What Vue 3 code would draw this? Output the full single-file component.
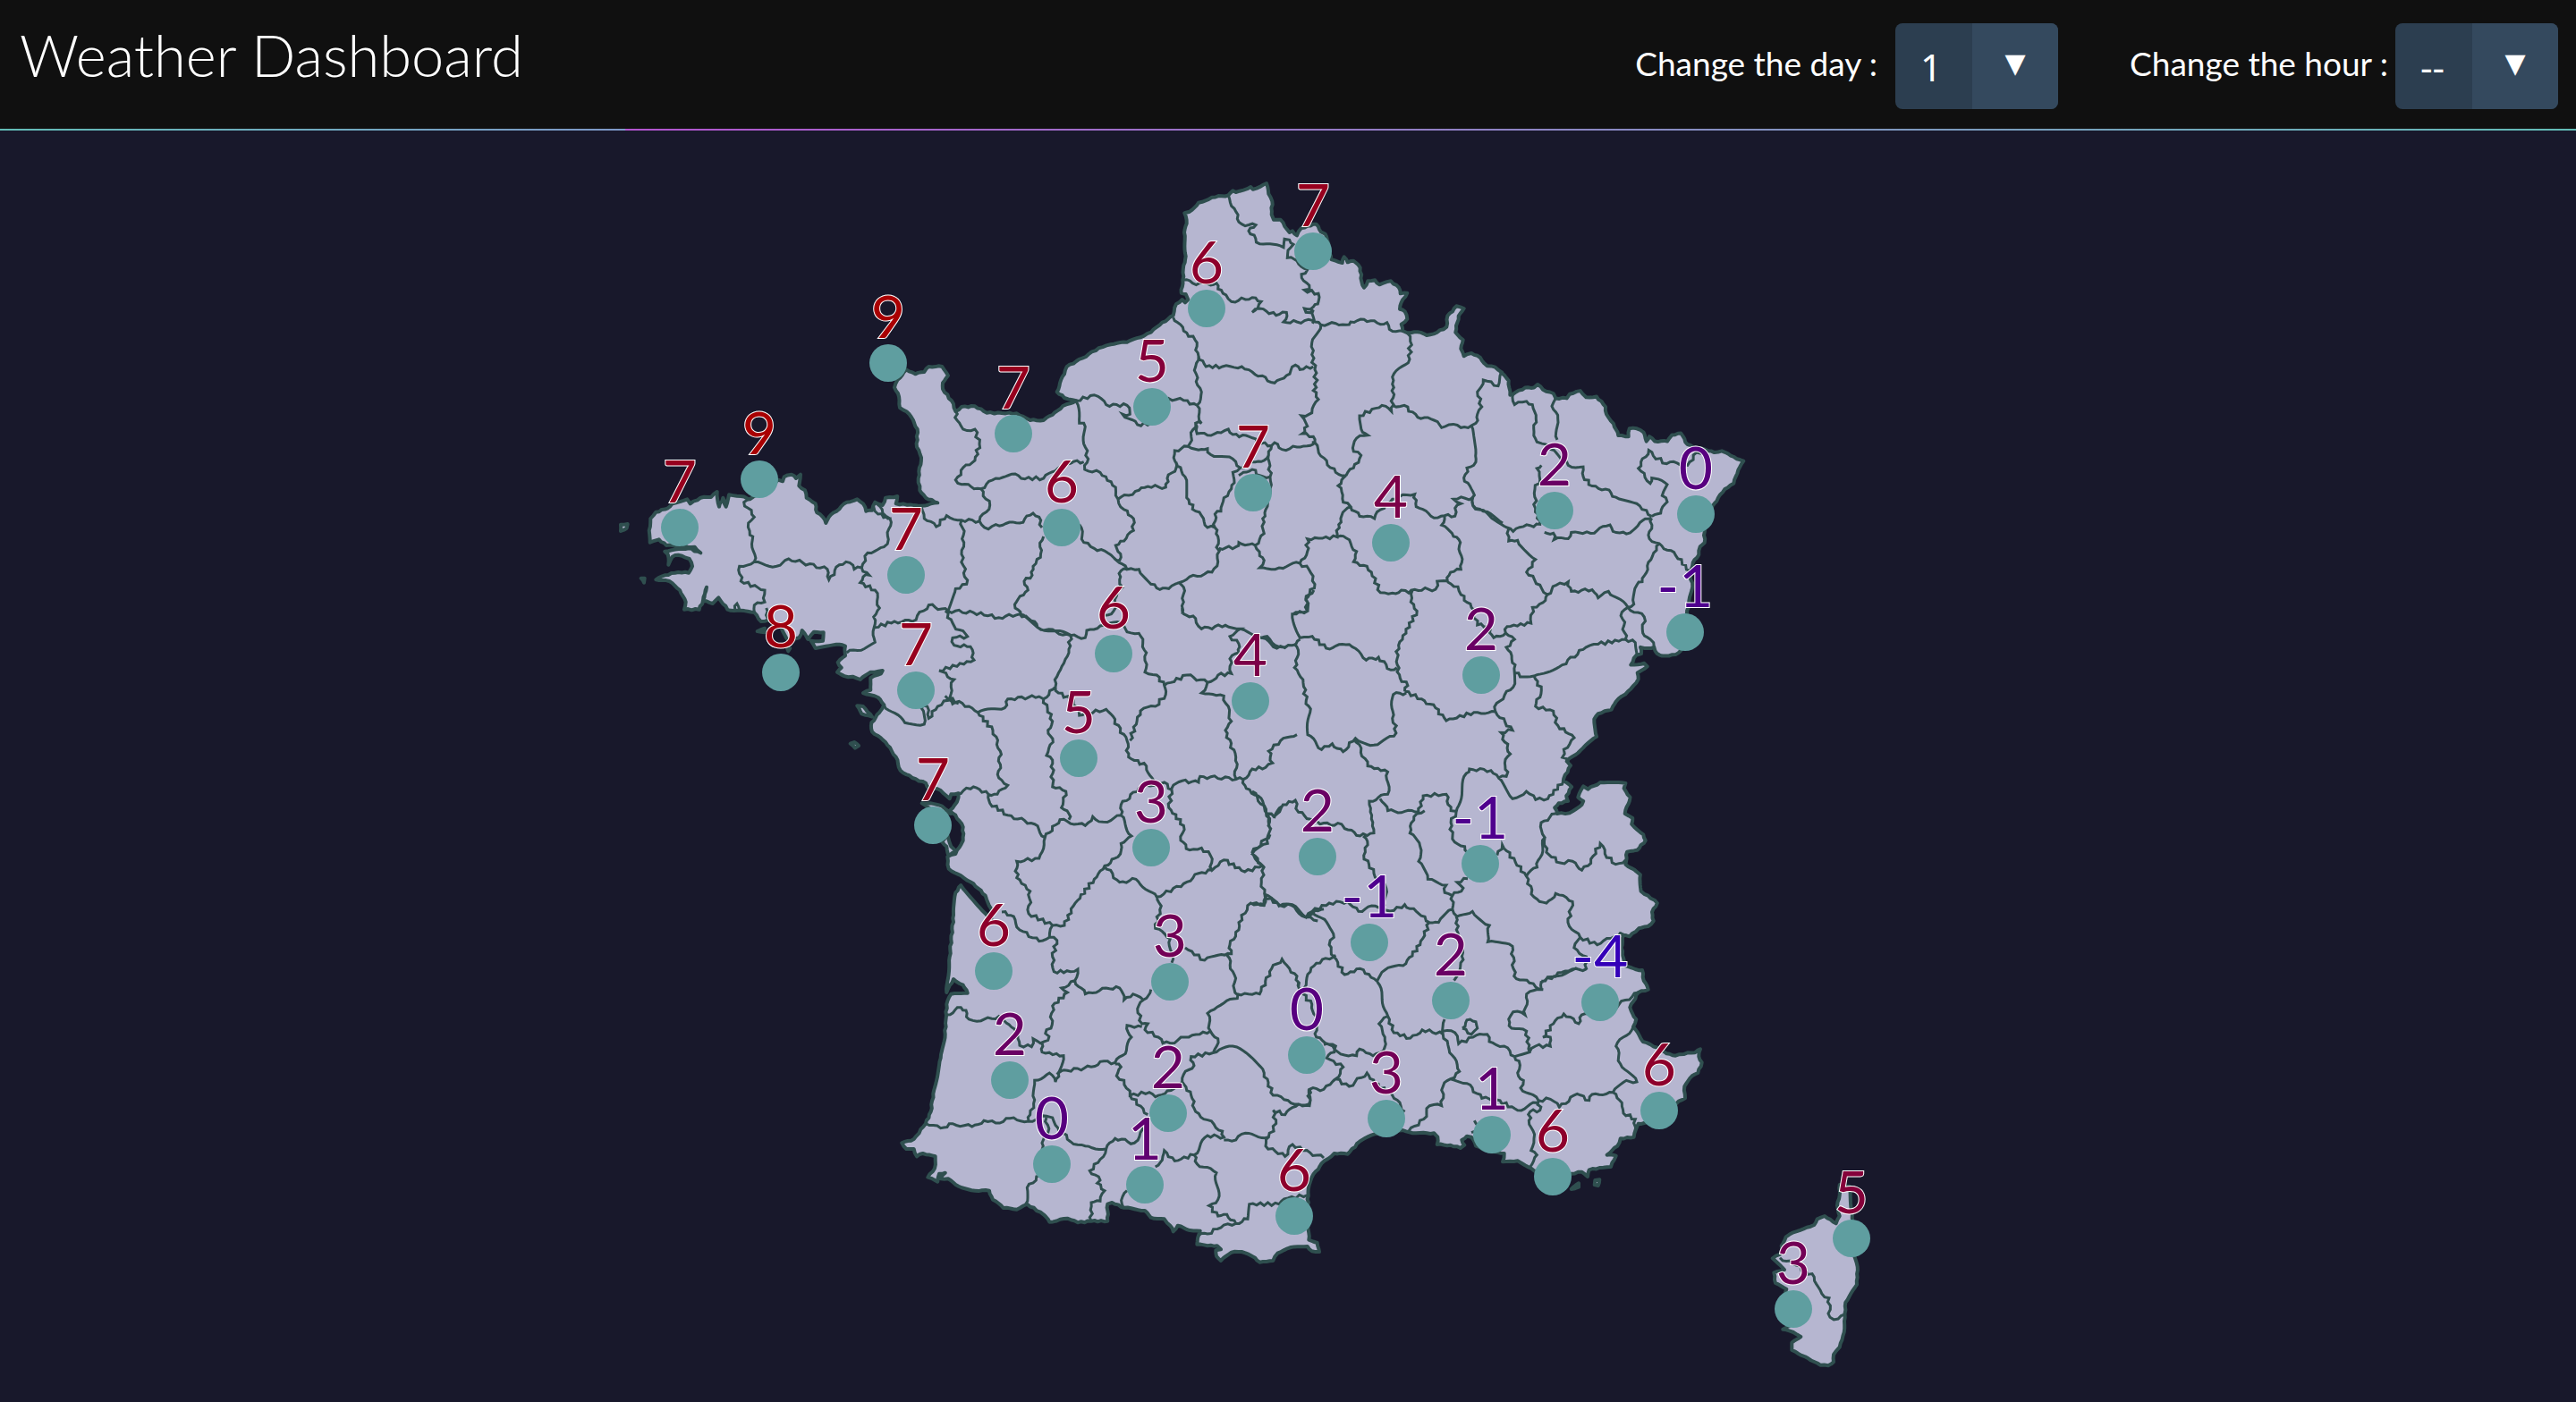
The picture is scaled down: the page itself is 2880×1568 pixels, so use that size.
<script setup>
import { ref } from 'vue'

const day = ref('1')
const hour = ref('--')
const days = ['1', '2', '3', '4', '5', '6', '7']
const hours = ['--', '0', '3', '6', '9', '12', '15', '18', '21']

// Map sheets: origin and units per pixel. Every line is stored in its sheet's own grid.
const sheets = {
  A: [680, 300, 3, 3],
  B: [1160, 180, 3, 3],
  C: [1540, 340, 3, 2.8],
  D: [940, 680, 3, 3],
  E: [1400, 660, 2.904, 3],
  F: [980, 980, 3, 3],
  G: [1440, 960, 3, 3],
  H: [1940, 1280, 3, 3],
}

const mainland = [
  'B 130,805 90,795 65,775 75,745 90,715 98,690 130,672 150,662 205,628 245,616 300,608 345,592 380,575 410,550 455,518 465,480 485,465 495,475 505,465 497,447 482,443 487,400 490,350 497,320 492,240 500,210 493,175 510,170 540,140 585,122 640,115 655,100 665,105 715,87 722,95 768,75 775,110 787,135 785,180 792,197 815,197 845,240 855,235 870,250 885,225 905,218 935,212 950,238 965,245 972,265 985,330 1000,335 1022,342 1028,322 1040,340 1060,335 1082,358 1087,405 1095,425 1108,403 1132,400 1147,415 1185,403 1212,425 1217,445 1240,443 1225,465 1215,497 1232,505 1240,530 1220,548 1225,570 1240,577 1275,574 1305,585 1340,575 1372,557 1375,520 1392,505 1405,487 1430,495 1412,520 1402,575 1427,600 1420,630 1430,655 1455,645 1485,660 1508,688 1535,692 1558,710',
  'C 415,215 440,240 445,285 495,262 525,262 537,252 555,268 590,280 598,295 635,295 645,282 680,272 700,292 735,290 765,322 768,345 792,375 808,412 842,415 845,390 870,390 893,402 902,430 912,415 930,430 972,430 988,410 1018,405 1040,440 1070,450 1110,460 1130,465 1155,460 1185,475 1228,492 1210,520 1195,562 1165,580 1130,625 1110,660 1097,700 1097,748 1082,760 1078,785 1058,810 1047,840 1057,885 1045,930 1038,970 1040,1040 1018,1085 1000,1098 955,1102 938,1095 928,1075 908,1078 882,1075 885,1095 868,1100 850,1130 895,1125 905,1135 872,1155 875,1175 850,1205 800,1245 785,1270 740,1283 727,1300 735,1355 690,1390 635,1432 648,1445 625,1485',
  'E 1010,640 1037,660 1020,690 1025,708 995,715 982,730 990,750 1030,748 1070,720 1075,708 1058,695 1075,658 1090,668 1130,645 1212,648 1207,665 1227,695 1210,750 1235,765 1232,785 1270,820 1277,840 1250,872 1217,878 1212,920 1260,955 1262,1010 1285,1025 1315,1050 1298,1080 1303,1110 1285,1128 1255,1135 1225,1162 1195,1152',
  'G 1125,258 1118,300 1130,360 1165,372 1188,375 1193,410 1208,440 1175,450 1147,500 1155,520 1168,540 1158,565 1190,615 1240,635 1270,655 1300,662 1340,652 1365,652 1383,640 1378,665 1388,685 1375,720 1355,730 1330,765 1332,805 1310,815 1250,870 1195,888 1175,890 1160,935 1115,940 1105,965 1070,995 1100,998 1083,1035 1045,1038 1010,1045 1005,1068 985,1052 950,1058 890,1060 825,1048 795,1030 770,1015 720,1018 725,990 680,985 630,965 615,935 600,932 583,945 592,962 578,972 545,962 500,960 502,935 490,922 430,922 385,912 330,915 290,925 240,950 200,992 155,990 122,1015 85,1060 68,1110 65,1200 70,1280 98,1290 105,1320 80,1318 65,1302 10,1305',
  'F 1345,1265 1330,1290 1285,1295 1260,1275 1225,1260 1190,1262 1155,1290 1140,1275 1138,1255 1155,1252 1142,1240 1110,1240 1075,1235 1080,1205 1085,1190 1040,1185 1010,1172 995,1192 985,1172 965,1150 920,1145 900,1122 830,1112 790,1095 775,1100 775,1157 720,1157 675,1162 640,1148 580,1160 560,1135 505,1100 470,1118 425,1113 390,1085 378,1055 330,1055 275,1040 240,1015 215,1015 230,995 210,998 205,1025 172,1010 195,980 197,940 155,930 135,940 125,915 100,915 85,895 125,882 165,830 182,790 190,730 215,610 230,530 235,430 250,395 305,392 290,365 258,345 235,390 245,270 258,130 265,55 283,30 365,125 385,150 385,110 365,65 325,25 283,-2',
  'D 362,875 358,835 385,825 410,780 410,735 385,695 365,680 390,650 395,622 370,625 365,640 335,612 290,600 285,587 240,570 200,545 185,500 150,450 105,415 103,385 130,350 145,325 125,300 75,285 100,275 100,245',
  'A 880,1375 915,1360 920,1350 880,1355 845,1380 820,1370 805,1372 768,1355 782,1340 770,1322 795,1300 795,1268 765,1262 695,1275 680,1250 720,1250 722,1222 690,1220 670,1245 650,1215 640,1240 605,1250 580,1205 540,1180 512,1185 490,1155 400,1145 370,1105 350,1125 318,1115 330,1070 318,1115 305,1145 255,1145 260,1120 240,1080 205,1050 160,1045 190,1030 235,1020 270,1022 282,1000 272,975 235,962 215,968 202,995 200,960 190,950 270,940 310,955 290,935 195,930 170,910 140,920 137,880 142,840 160,818 200,805 215,790 265,775 275,790 310,770 345,768 365,750 372,800 385,770 395,800 405,760 445,765 475,775 500,760 570,710 585,715 590,700 615,692 630,705 645,692 640,730 660,745 665,770 695,790 700,820 720,835 730,855 740,835 800,785 835,775 855,790 865,815 885,812 895,785 920,795 930,770 970,765 965,790 1050,797 1105,787 1065,770 1045,745 1040,705 1050,635 1035,600 1037,540 1010,490 978,468 972,420 960,400 970,375 1000,340 1030,355 1060,348 1075,330 1120,330 1140,360 1122,385 1122,405 1158,455 1165,480 1185,465 1230,463 1270,485 1370,487 1415,510 1460,510 1490,492 1525,462 1560,450',
]

const islands = [
  'H 350,135 383,140 390,220 395,260 400,375 410,410 408,470 370,530 368,580 365,630 350,680 330,705 330,730 312,742 285,740 245,718 190,690 190,665 220,645 195,630 160,620 180,610 150,560 172,485 135,465 130,430 165,420 125,382 160,360 155,340 170,310 195,295 240,278 265,270 275,250 300,240 338,265 350,240 342,205 350,170',
  'A 42,860 65,858 62,872 42,882',
  'A 110,1040 122,1040 120,1055',
  'A 500,1218 525,1208 525,1222',
  'A 600,1275 610,1275 604,1285',
  'A 835,1468 855,1470 885,1505 850,1495',
  'D 32,455 45,450 60,462 48,470',
  'D 272,655 300,655 340,665 370,690 310,680',
  'D 340,785 358,760 370,800 385,815 362,832 355,800',
  'G 950,1110 975,1090 975,1103',
  'G 1030,1080 1045,1078 1040,1098 1028,1095',
]

const borders = [
  'A 475,775 455,785 490,835 470,855 475,895 485,900 490,985 440,1000 445,1050 525,1080 525,1120 490,1130 490,1155',
  'A 490,985 565,1000 605,975 735,1010 740,1045 775,995 810,988 825,1010 850,1005 870,955 925,935 940,910 945,840 905,825 890,800',
  'A 895,785 912,800 930,830 950,840',
  'A 850,1005 875,1030 855,1035 845,1055 895,1080 910,1140 890,1170 895,1255 870,1270 800,1290',
  'A 895,1205 960,1185 1020,1185 1075,1130 1140,1150 1225,1155 1310,1172 1380,1160 1440,1205 1550,1230',
  'A 1050,800 1060,840 1100,867 1135,830 1185,845 1245,848 1280,795 1250,740 1185,725 1165,710 1200,660 1230,645 1245,590 1230,540 1190,540 1170,510 1165,480',
  'A 1185,845 1193,920 1185,960 1202,1060 1165,1075 1140,1150',
  'A 1250,740 1300,705 1365,690 1385,705 1460,705 1500,680 1560,650',
  'A 1245,848 1275,875 1300,860 1380,855 1425,822 1445,835 1455,870',
  'A 1460,900 1448,935 1450,970 1425,1000 1422,1030 1395,1050 1408,1080 1375,1110 1365,1140 1385,1165',
  'A 425,1145 432,1125 440,1145',
  'A 530,1140 535,1175',
  'B 640,115 660,160 675,205 685,212 732,215 708,235 745,278 825,290 828,262 845,265 858,280 840,300 838,325 870,335 905,365 885,380 912,430 895,433 942,445 940,480 925,490 895,495 900,508 925,500 922,545',
  'B 485,400 500,398 520,410 570,412 600,410 605,430 632,450 650,472 720,458 750,472 720,508 745,495 800,518 835,508 825,540 870,540 922,535 950,550 1000,545 1035,550 1050,540 1095,532 1150,548 1172,542 1180,565 1225,570',
  'B 455,525 490,570 528,600 540,655 530,690 532,740 550,775 535,820 550,880 530,880 535,915 570,920 615,912 640,900 655,918 710,925 750,948 785,955 795,945 820,968 870,960 915,955 925,940',
  'B 540,655 565,690 620,690 685,690 720,708 795,745 835,720 865,685 880,700 925,690',
  'B 950,550 920,610 920,650 930,700 935,760 925,770 942,800 920,845 885,855 905,890 888,915 925,925 930,945 950,990 1000,1045 1035,1055',
  'B 1240,577 1250,605 1248,665 1190,725 1195,760 1187,840 1155,820 1080,855 1090,910 1108,920 1070,930 1060,975 1085,988 1060,1030 1035,1055',
  'B 1190,820 1230,820 1275,860 1330,870 1355,895 1380,885 1420,895 1455,888 1470,880 1475,850 1490,825 1475,775 1495,735 1545,755 1555,710',
  'B 1455,888 1470,980 1470,1010 1440,1030 1432,1075 1460,1110 1460,1155 1495,1175 1560,1215',
  'B 130,805 190,785 230,818 300,820 310,850 285,850 335,885 380,880 440,797 490,803 535,820',
  'B 130,808 140,880 155,880 160,960 170,1000 158,1035 210,1045 262,1095 270,1135 340,1105 370,1092 430,1095 435,1065 465,1030 460,972 505,958 530,880',
  'B 110,1010 155,1010',
  'B 505,958 540,970 570,965 580,985 655,1000 680,1030 655,1045 660,1080 650,1100 625,1130 615,1175 595,1185 595,1230 570,1230 550,1190 530,1175 500,1130 495,1060 465,1010',
  'B 680,1030 730,1010 760,1005 775,975 785,955',
  'B 775,985 780,1060 780,1100 765,1170 755,1200 760,1250 730,1290 675,1280 665,1295 608,1300',
  'B 675,1055 690,1045 720,1035 745,1055 780,1060',
  'B 595,1230 605,1260 605,1345 585,1380 510,1395 475,1415 490,1430 490,1480 485,1520',
  'B 270,1135 290,1170 322,1200 322,1240 290,1275 262,1290 280,1330 265,1340 300,1370 340,1370 380,1420 410,1438 440,1435 475,1415',
  'B 140,1220 155,1280 190,1300 235,1315 265,1340',
  'B 300,1370 280,1375 275,1405 285,1430 265,1460 255,1510 225,1525',
  'B 730,1290 745,1325 760,1340 745,1365 810,1365 845,1355 880,1350 905,1310 905,1268 1005,1262 1010,1220 1020,1190 1050,1160 1025,1145 1020,1110 1008,1090 1020,1070 1035,1055',
  'B 1050,1160 1080,1192 1130,1200 1150,1170 1190,1135 1225,1120 1265,1118 1270,1160 1330,1198 1365,1190 1400,1192 1400,1165 1420,1150 1395,1135 1460,1130',
  'B 1365,1190 1355,1222 1395,1260 1418,1280 1420,1370 1385,1380 1375,1410 1340,1410 1335,1437 1265,1438 1245,1450 1220,1440 1190,1450 1150,1448 1120,1380 1105,1360 1060,1345 1070,1310 1035,1265 1005,1262',
  'B 880,1350 910,1370 930,1420 900,1470 905,1510 855,1522',
  'C 455,280 460,315 500,305 520,315 532,360 525,400 535,432 552,437 580,455 635,495 640,505 690,510 690,540 720,570 765,580 800,605 880,632 920,665',
  'C 598,295 585,320 605,360 603,425',
  'C 550,505 535,515 545,550 528,580 530,640 545,690 490,697 455,712 435,700 375,662 320,632 320,605',
  'C 440,705 435,718 440,742 470,740 530,800 500,840 545,880 570,910',
  'C 560,715 590,718 592,738 640,735 650,715 715,718 780,692 790,712 835,720 880,685 920,670',
  'C 920,665 950,655 972,620 955,600 972,565 920,545 915,562 895,530 875,515 910,458 925,475 970,500 1005,498 1040,505 1070,465 1110,460',
  'C 920,670 912,735 945,750 1020,800 1022,815 1047,835',
  'C 945,750 905,820 888,870 870,880 860,940 840,950',
  'C 570,910 600,880 640,870 650,900 720,895 740,920 775,900 840,950 820,965 832,1050 740,1065 700,1075 620,1130 525,1165 490,1168 462,1155',
  'C 840,950 895,980 890,1030 915,1050 928,1075',
  'C 832,1050 865,1060 870,1095',
  'C 570,910 555,935 520,950 515,1000 435,1010 430,1030 460,1050 432,1075 462,1130 455,1200 400,1250 395,1275',
  'C 430,1030 390,1045 370,1010 335,1005 315,950 280,910 270,885 235,870',
  'C 525,1165 550,1210 530,1260 590,1275 605,1320 660,1358 625,1395 620,1420 640,1435',
  'D 350,10 380,60 425,95 375,100 380,125 435,130 447,175 330,210 380,240 370,265 360,310 325,330 295,370 290,330 270,335 280,390 215,385 145,325',
  'D 600,20 650,45 660,65 770,92 820,100 825,75 870,60 940,50 960,80 1000,85 1025,150 1020,215 1060,225 1085,260 1090,290 1055,330 1005,345 970,445',
  'D 360,305 430,330 460,350 550,335 560,305 665,297 680,305 720,265 725,230 765,150 770,92',
  'D 350,295 395,320 375,322 360,305',
  'D 720,265 730,285 780,310 800,360 890,340 905,355 960,445 965,500 1025,530 1050,580',
  'D 680,305 710,380 695,410 712,450 690,495 710,510 710,600 755,615 740,670 765,690 765,710',
  'D 460,350 510,410 535,480 530,570 560,595 525,625 495,625 445,600 390,622',
  'D 495,625 500,655 560,695 650,725 685,770 735,710 820,730 845,700 880,718 940,695 975,765 940,790 930,835 885,865 850,910 780,1000 750,1065 710,1065',
  'D 685,770 665,840 590,850 590,905 635,950 630,1025 710,1065 700,1105',
  'D 940,695 940,660 1000,605 1050,595 1085,585 1110,610 1100,670 1150,730 1140,780 1170,812 1210,805 1240,830 1245,880 1285,845 1355,885 1415,865 1380,820 1440,760',
  'D 1110,605 1145,580 1200,585 1205,565 1350,575 1380,540 1425,535 1448,520 1435,480 1475,445 1530,425',
  'D 1350,575 1360,605 1400,630 1430,690 1440,740',
  'D 1430,690 1455,700 1480,665',
  'D 885,865 935,920 990,910 1060,970 1150,925 1200,890 1245,880',
  'D 1085,260 1160,225 1230,250 1210,285 1285,295 1310,380 1290,410 1325,500 1325,572',
  'D 1230,250 1265,225 1310,220 1305,170 1335,150 1335,120 1305,95 1340,70 1290,58 1210,70 1190,35 1150,20 1145,0',
  'D 1340,70 1400,95 1430,95 1470,130 1500,125',
  'E 200,0 175,20 180,70 130,80 155,160 195,155 240,195 315,182 370,235 410,225 450,268 470,260',
  'E 520,0 515,40 535,70 475,185 468,240 480,295 505,320 495,340',
  'E 30,160 80,195 130,185 155,165',
  'E 135,180 150,215 137,260 165,300 175,370 188,410 180,485 225,535 260,515 295,542 335,497 395,520 460,490 468,455 455,430 458,350 500,345',
  'E 495,340 550,365 595,395 630,438 720,410 790,408 845,470 808,478 838,550 820,580 830,610 825,625 800,630 775,605 705,600 695,615 662,745 645,780 650,835 690,860 700,880',
  'E 800,630 845,700 890,675 920,703 960,700 1010,640',
  'E 335,497 375,590 440,610 440,685 380,708 395,815 350,825 300,800 290,785 220,785 150,745 140,705 100,720 70,760 50,750',
  'E 415,700 440,740 540,745 555,690 630,685 645,740 660,742',
  'E 560,740 525,760 512,815 545,860 540,910 570,970 630,990 625,1015 650,1025 685,1000 665,980 700,968',
  'E 650,1025 650,1070 605,1115 575,1115 540,1085 495,1055 460,1075 400,1060 345,1078 310,1045 250,1050 195,1078 175,1098 130,1055 90,1058 40,1025',
  'E 360,825 375,855 362,890 395,950 435,1000 430,1060',
  'E 795,890 812,855 890,960 915,1030 955,1050 985,1018 1040,1045 1025,1115 1065,1165 1120,1190 1165,1168 1195,1155',
  'E 890,960 925,930 950,830 938,780 985,750',
  'E 950,830 955,880 1000,915 1040,910 1070,940 1090,925 1130,850 1145,885 1180,920 1212,905',
  'E 650,1070 665,1095 715,1078 770,1125 765,1180 845,1195 850,1295 900,1318 945,1340',
  'E 662,1095 668,1150 685,1240 655,1310',
  'E 575,1115 545,1190 490,1260 430,1275 405,1312 350,1270 300,1290 265,1230 250,1190 265,1165 235,1105 195,1078',
  'E 0,675 45,735 60,800 50,850 0,885 38,930 30,980 40,1020 38,1058 0,1052',
  'E 1065,1165 1045,1200 1085,1230 1085,1270 1040,1275 980,1295 940,1315',
  'F 420,120 460,135 480,180 545,218 580,205 605,215 590,270 595,320 650,320 675,312 665,350 620,375 640,390 590,435 585,510 570,515 575,550 550,560 525,545 520,572 480,568 470,520 410,470 350,485 310,480 300,450 283,440 235,465',
  'F 665,350 700,395 770,375 815,375 830,415 860,395 895,415 920,380',
  'F 895,415 875,445 890,495 910,495 900,515 945,540 960,560 985,560 1035,540 1120,520',
  'F 890,505 840,500 855,540 835,595 800,625 750,622 720,640 640,652 610,660 600,690 580,660 530,685 530,750 515,800 510,820',
  'F 555,560 555,590 627,602 605,665',
  'F 165,830 215,845 255,830 320,840 360,820 400,828 460,810 510,822 570,805 590,810 600,835 650,890 700,905 770,915',
  'F 570,810 575,860 555,895 570,960 535,1020 505,1045 500,1100',
  'F 770,915 750,950 715,988 750,1020 740,1030 765,1055 750,1090 720,1095 720,1157',
  'F 770,915 800,880 865,895 885,860 890,825',
  'F 800,630 820,640 805,670 830,685 850,735 915,725 935,740 975,720 1025,690 1030,665 1065,635 1055,605 1140,590 1195,570 1260,610 1300,660 1330,735 1380,752 1415,765',
  'F 850,735 910,800',
  'F 1120,520 1145,545 1130,590',
  'F 1120,520 1110,460 1165,425 1210,410 1200,380 1200,330 1175,265',
  'F 940,75 955,100 935,175 985,210 990,290',
  'F 1035,240 1100,282 1145,265 1190,260 1185,230 1215,180 1215,155 1255,90 1300,95 1300,55',
  'F 1440,138 1470,115 1500,110',
  'F 1300,60 1350,100 1390,97 1440,138 1480,150',
  'F 1210,395 1285,395 1325,310 1360,278 1385,310 1410,335 1415,370',
  'F 1025,690 1055,735 1070,790 1160,855 1165,875 1110,870 1065,935 1000,955 965,920 960,940 935,975',
  'F 1165,885 1205,885 1225,865 1315,875 1340,830 1330,785 1370,800 1415,765 1450,765 1450,715',
  'F 1315,875 1305,905 1370,940 1395,900 1430,920 1500,945',
  'F 1065,935 1075,965 1140,995 1145,1085 1115,1105 1145,1140 1175,1135 1205,1165 1165,1170 1110,1200 1080,1205',
  'F 1205,1165 1245,1150 1250,1100 1350,1100 1380,1080 1445,1070',
  'F 840,1055 825,1075 828,1112',
  'G 300,415 335,530 355,585 410,603 450,575 520,590',
  'G 335,530 305,555 325,600 320,645 285,662 240,640 230,662 190,660 150,630 120,625',
  'G 160,325 95,352 75,380 55,435',
  'G 35,415 50,455 80,490 95,530 95,600 160,630 155,650 130,670 185,700 160,740 205,765 265,720 290,755 350,795 392,850',
  'G 160,740 120,775 72,775 72,830 38,825',
  'G 525,540 520,590 540,640 575,715 545,740 520,765 515,830 475,830 455,875 405,915',
  'G 545,740 600,755 650,805 700,810 770,845 835,820',
  'G 520,580 560,585 572,622 620,600 668,590 675,615 725,630 760,665',
  'G 585,570 600,542 630,548 635,570 615,590 585,570',
  'G 760,665 810,650 800,580 750,570 740,540 755,515 795,525 800,455 850,440 850,412',
  'G 850,412 930,378 1000,372',
  'G 810,650 830,630 880,630 880,600 855,600 890,555 925,522 975,555 985,525 1060,530 1110,490 1175,450',
  'G 1158,565 1100,630 1115,690 1170,750 1135,745 1090,785 1020,792 1010,812 970,790 910,835 880,808 840,812 780,770 790,745 770,720 775,680 760,665',
  'G 1090,785 1120,820 1125,855 1165,875 1165,915',
  'G 840,815 845,845 812,850 808,880 825,940 815,980 835,995 812,1035',
  'G 625,880 640,910 615,920',
  'H 150,380 205,405 265,445 290,500 315,515 318,580 345,585 368,570',
]

function points(line) {
  const [key, ...pairs] = line.split(' ')
  const [ox, oy, sx, sy] = sheets[key]
  return pairs.map((p) => {
    const [x, y] = p.split(',').map(Number)
    return [ox + x / sx, oy + y / sy]
  })
}

// Breaks long straight runs into short uneven steps, as on a surveyed boundary.
function toPath(pts, amp, closed) {
  const list = closed ? [...pts, pts[0]] : pts
  let d = `M${list[0][0].toFixed(1)} ${list[0][1].toFixed(1)}`
  for (let i = 1; i < list.length; i++) {
    const [x0, y0] = list[i - 1]
    const [x1, y1] = list[i]
    const len = Math.hypot(x1 - x0, y1 - y0)
    const n = Math.max(1, Math.round(len / 4))
    for (let k = 1; k <= n; k++) {
      const t = k / n
      const x = x0 + (x1 - x0) * t
      const y = y0 + (y1 - y0) * t
      const wave = k < n ? amp * Math.sin(x * 12.9 + y * 78.2) : 0
      d += `L${(x - ((y1 - y0) / len) * wave).toFixed(1)} ${(y + ((x1 - x0) / len) * wave).toFixed(1)}`
    }
  }
  return closed ? d + 'Z' : d
}

const landPath = [
  toPath(mainland.flatMap(points), 0.7, true),
  ...islands.map((l) => toPath(points(l), 0.4, true)),
].join('')
const borderPath = borders.map((l) => toPath(points(l), 1.8, false)).join('')

const stations = [
  [993, 406, 9], [849, 536, 9], [760, 590, 7], [1133, 485, 7], [1187, 590, 6],
  [1013, 643, 7], [873, 752, 8], [1024, 772, 7], [1468, 281, 7], [1349, 345, 6],
  [1288, 455, 5], [1401, 551, 7], [1555, 607, 4], [1738, 571, 2], [1896, 575, 0],
  [1884, 707, -1], [1656, 755, 2], [1245, 731, 6], [1398, 784, 4], [1206, 848, 5],
  [1043, 923, 7], [1287, 948, 3], [1111, 1086, 6], [1308, 1098, 3], [1473, 958, 2],
  [1655, 966, -1], [1531, 1054, -1], [1622, 1119, 2], [1789, 1121, -4], [1550, 1251, 3],
  [1668, 1269, 1], [1855, 1242, 6], [1736, 1316, 6], [1461, 1180, 0], [1129, 1208, 2],
  [1176, 1302, 0], [1306, 1245, 2], [1280, 1325, 1], [1447, 1360, 6], [2070, 1385, 5],
  [2005, 1464, 3],
].map(([x, y, t]) => ({
  x,
  y,
  t,
  color: `rgb(${Math.round(88 + t * 9)}, 0, ${Math.max(0, Math.round(128 - t * 14))})`,
}))
</script>

<template>
  <div class="dashboard">
    <header class="topbar">
      <h1 class="title">Weather Dashboard</h1>
      <form class="filters">
        <div class="filter filter-day">
          <label for="day">Change the day :</label>
          <div class="picker">
            <select id="day" v-model="day">
              <option v-for="d in days" :key="d">{{ d }}</option>
            </select>
            <span class="arrow" aria-hidden="true">▼</span>
          </div>
        </div>
        <div class="filter">
          <label for="hour">Change the hour :</label>
          <div class="picker">
            <select id="hour" v-model="hour">
              <option v-for="h in hours" :key="h">{{ h }}</option>
            </select>
            <span class="arrow" aria-hidden="true">▼</span>
          </div>
        </div>
      </form>
    </header>
    <main>
      <svg class="map" viewBox="0 146 2880 1422">
        <path class="land" :d="landPath" />
        <path class="border" :d="borderPath" />
        <circle v-for="(s, i) in stations" :key="'c' + i" class="station" :cx="s.x" :cy="s.y" r="21" />
        <text v-for="(s, i) in stations" :key="'t' + i" class="temp" :x="s.x" :y="s.y - 28" :fill="s.color">{{ s.t }}</text>
      </svg>
    </main>
  </div>
</template>

<style>
body {
  margin: 0;
  background: #18182b;
}
</style>

<style scoped>
.dashboard {
  min-height: 100vh;
  background: #18182b;
}
.topbar {
  display: flex;
  justify-content: space-between;
  align-items: flex-start;
  box-sizing: border-box;
  height: 146px;
  padding: 26px 20px 0 22px;
  background: #101010;
  border-bottom: 2px solid;
  border-image: linear-gradient(to right, #62bcb6 0%, #7e98c8 24.3%, #b254cf 24.3%, #62bcb6 100%) 1;
}
.title {
  margin: 0;
  color: #fff;
  font: 300 65px/70px Lato, "Liberation Sans", sans-serif;
}
.filters {
  display: flex;
  gap: 80px;
}
.filter {
  display: flex;
  align-items: center;
  gap: 8px;
}
.filter-day {
  gap: 20px;
}
.filter label {
  padding-bottom: 6px;
  color: #fff;
  font: 400 37px/48px Lato, "Noto Sans", sans-serif;
}
.picker {
  position: relative;
  width: 182px;
  height: 96px;
  border-radius: 8px;
  overflow: hidden;
}
.picker select {
  appearance: none;
  width: 100%;
  height: 100%;
  margin: 0;
  padding: 2px 0 0 28px;
  border: 0;
  outline: 0;
  background: #2c3e50;
  color: #fff;
  font: 400 42px/48px "Noto Sans", sans-serif;
}
.arrow {
  position: absolute;
  top: 0;
  right: 0;
  width: 96px;
  height: 96px;
  background: #34495e;
  color: #fff;
  font: 30px/90px "DejaVu Sans", sans-serif;
  text-align: center;
  pointer-events: none;
}
.map {
  display: block;
  width: 100%;
}
.land {
  fill: #b6b6d0;
  stroke: #2f4f4f;
  stroke-width: 4;
  stroke-linejoin: round;
}
.border {
  fill: none;
  stroke: #2f4f4f;
  stroke-width: 3;
}
.station {
  fill: #5f9ea0;
}
.temp {
  font: 400 66px Lato, sans-serif;
  text-anchor: middle;
  stroke: #fff;
  stroke-width: 2;
  paint-order: stroke;
}
</style>
